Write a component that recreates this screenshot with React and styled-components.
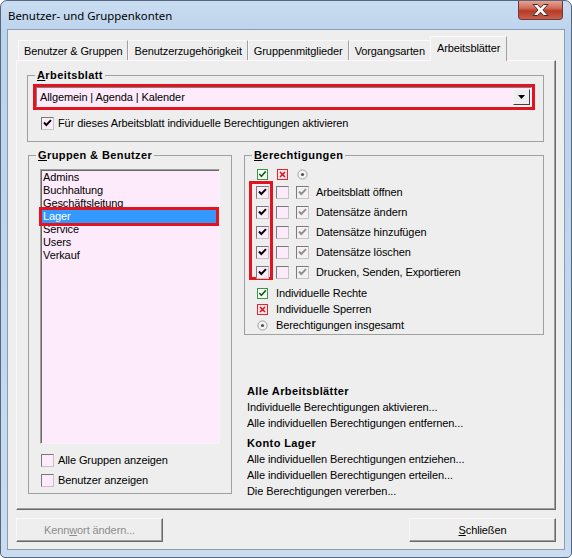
import React from 'react'
import styled, { createGlobalStyle } from 'styled-components'

const GlobalStyle = createGlobalStyle`
  html, body {
    margin: 0;
    padding: 0;
    background: #ffffff;
  }
  body {
    font-family: "Liberation Sans", Arial, sans-serif;
    font-size: 11px;
    letter-spacing: -0.1px;
    color: #000;
  }
`;

const tabs = ["Benutzer & Gruppen", "Benutzerzugehörigkeit", "Gruppenmitglieder", "Vorgangsarten", "Arbeitsblätter"];
const groups = ["Admins", "Buchhaltung", "Geschäftsleitung", "Lager", "Service", "Users", "Verkauf"];
const rights = ["Arbeitsblatt öffnen", "Datensätze ändern", "Datensätze hinzufügen", "Datensätze löschen", "Drucken, Senden, Exportieren"];

function CheckMark({ color }) {
    return (
        <svg width="11" height="11" viewBox="0 0 11 11">
            <path d="M2 4.5 L4.3 7 L9 2.2" fill="none" stroke={color} strokeWidth="1.9" />
        </svg>
    )
}

function CheckBox({ checked, disabled }) {
    return (
        <Box $disabled={disabled}>
            {checked && <CheckMark color={disabled ? "#8f8f8f" : "#000"} />}
        </Box>
    )
}

function GreenIcon() {
    return (
        <svg width="11" height="11" viewBox="0 0 11 11">
            <rect x="0.5" y="0.5" width="10" height="10" fill="#fff" stroke="#2f9d3a" />
            <path d="M2.3 5 L4.4 7.4 L8.8 2.4" fill="none" stroke="#155f1c" strokeWidth="1.6" />
        </svg>
    )
}

function RedIcon() {
    return (
        <svg width="11" height="11" viewBox="0 0 11 11">
            <rect x="0.5" y="0.5" width="10" height="10" fill="#fde6ea" stroke="#e3262e" />
            <path d="M3 3 L8 8 M8 3 L3 8" fill="none" stroke="#d8141c" strokeWidth="1.6" />
        </svg>
    )
}

function TotalIcon() {
    return (
        <svg width="11" height="11" viewBox="0 0 11 11">
            <circle cx="5.5" cy="5.5" r="4.6" fill="#f3f3f3" stroke="#a0a0a0" />
            <circle cx="5.5" cy="5.5" r="1.6" fill="#555" />
        </svg>
    )
}

function App() {
    return (
        <>
            <GlobalStyle />
            <Window>
                <TitleBar>
                    <Title>Benutzer- und Gruppenkonten</Title>
                    <CloseButton>
                        <svg width="17" height="12" viewBox="0 0 17 12">
                            <path d="M1 0.5 H5.5 L8.5 3.8 L11.5 0.5 H16 L10.9 6 L16 11.5 H11.5 L8.5 8.2 L5.5 11.5 H1 L6.1 6 Z"
                                fill="#fff" stroke="#4a2a26" strokeWidth="1" />
                        </svg>
                    </CloseButton>
                </TitleBar>
                <Client>
                    <TabStrip>
                        {tabs.map((t, i) => (
                            <Tab key={t} $active={i === tabs.length - 1}>{t}</Tab>
                        ))}
                    </TabStrip>
                    <TabPanel>
                        <GroupBox>
                            <Legend><u>A</u>rbeitsblatt</Legend>
                            <ComboFrame>
                                <Combo>
                                    <ComboText>Allgemein | Agenda | Kalender</ComboText>
                                    <DropButton>
                                        <svg width="7" height="4" viewBox="0 0 7 4"><path d="M0 0 H7 L3.5 4 Z" fill="#000" /></svg>
                                    </DropButton>
                                </Combo>
                            </ComboFrame>
                            <CheckRow $indent={8} $top={5}>
                                <CheckBox checked />
                                <span>Für dieses Arbeitsblatt individuelle Berechtigungen aktivieren</span>
                            </CheckRow>
                        </GroupBox>

                        <Columns>
                            <GroupsBox>
                                <Legend><u>G</u>ruppen &amp; Benutzer</Legend>
                                <ListBox>
                                    {groups.map(g => (
                                        <ListItem key={g} $selected={g === "Lager"}>{g}</ListItem>
                                    ))}
                                </ListBox>
                                <CheckRow $indent={7} $top={8}>
                                    <CheckBox />
                                    <span>Alle Gruppen anzeigen</span>
                                </CheckRow>
                                <CheckRow $indent={7} $top={4}>
                                    <CheckBox />
                                    <span>Benutzer anzeigen</span>
                                </CheckRow>
                            </GroupsBox>

                            <RightColumn>
                                <RightsBox>
                                    <Legend><u>B</u>erechtigungen</Legend>
                                    <IconHeader>
                                        <GreenIcon />
                                        <RedIcon />
                                        <TotalIcon />
                                    </IconHeader>
                                    <RightsGrid>
                                        <Highlight />
                                        {rights.map((r, i) => (
                                            <React.Fragment key={r}>
                                                <Cell $col={1} $row={i + 1}><CheckBox checked /></Cell>
                                                <Cell $col={2} $row={i + 1}><CheckBox /></Cell>
                                                <Cell $col={3} $row={i + 1}><CheckBox checked disabled /></Cell>
                                                <RightLabel $row={i + 1}>{r}</RightLabel>
                                            </React.Fragment>
                                        ))}
                                    </RightsGrid>
                                    <LegendList>
                                        <LegendRow><GreenIcon /><span>Individuelle Rechte</span></LegendRow>
                                        <LegendRow><RedIcon /><span>Individuelle Sperren</span></LegendRow>
                                        <LegendRow><TotalIcon /><span>Berechtigungen insgesamt</span></LegendRow>
                                    </LegendList>
                                </RightsBox>

                                <Links>
                                    <LinkHeading>Alle Arbeitsblätter</LinkHeading>
                                    <LinkLine>Individuelle Berechtigungen aktivieren...</LinkLine>
                                    <LinkLine>Alle individuellen Berechtigungen entfernen...</LinkLine>
                                    <LinkHeading $gap>Konto Lager</LinkHeading>
                                    <LinkLine>Alle individuellen Berechtigungen entziehen...</LinkLine>
                                    <LinkLine>Alle individuellen Berechtigungen erteilen...</LinkLine>
                                    <LinkLine>Die Berechtigungen vererben...</LinkLine>
                                </Links>
                            </RightColumn>
                        </Columns>
                    </TabPanel>

                    <ButtonRow>
                        <Button $disabled>Kenn<u>w</u>ort ändern...</Button>
                        <Button><u>S</u>chließen</Button>
                    </ButtonRow>
                </Client>
            </Window>
        </>
    )
}

const Window = styled.div`
    width: 572px;
    height: 558px;
    box-sizing: border-box;
    border: 1px solid #55677e;
    border-radius: 7px 7px 5px 5px;
    background: linear-gradient(180deg, #c9ddf2 0%, #bcd3ec 6%, #c2d7ee 60%, #cadcf0 100%);
    display: flex;
    flex-direction: column;
    overflow: hidden;
`;

const TitleBar = styled.div`
    height: 28px;
    flex: none;
    display: flex;
    justify-content: space-between;
    align-items: flex-start;
    padding-left: 7px;
`;

const Title = styled.div`
    margin-top: 7px;
    font-family: "Noto Sans", "Liberation Sans", sans-serif;
    font-size: 11.4px;
    letter-spacing: 0;
    color: #000;
`;

const CloseButton = styled.div`
    width: 45px;
    height: 19px;
    margin-right: 8px;
    box-sizing: border-box;
    border: 1px solid #6e3a35;
    border-top: none;
    border-radius: 0 0 4px 4px;
    background: linear-gradient(180deg, #e8a293 0%, #d06a58 40%, #b73a26 55%, #c8604c 100%);
    display: flex;
    align-items: center;
    justify-content: center;
`;

const Client = styled.div`
    flex: 1;
    min-height: 0;
    margin: 0 6px 7px;
    border: 1px solid #8a9db3;
    background: #eeeeee;
    padding: 6px 8px 7px;
    display: flex;
    flex-direction: column;
`;

const TabStrip = styled.div`
    height: 25px;
    flex: none;
    margin-bottom: -1px;
    padding-left: 2px;
    display: flex;
    align-items: flex-end;
    position: relative;
    z-index: 1;
`;

const Tab = styled.div`
    box-sizing: border-box;
    height: ${p => p.$active ? 25 : 20}px;
    margin: ${p => p.$active ? '0 -2px 0 -1px' : '0 0 1px'};
    padding: ${p => p.$active ? '0 6px 2px' : '0 5px'};
    display: flex;
    align-items: center;
    border: 1px solid;
    border-color: #fdf6fc #a0a0a0 transparent #fdf6fc;
    border-bottom: none;
    background: #eeeeee;
    white-space: nowrap;
`;

const TabPanel = styled.div`
    flex: 1;
    min-height: 0;
    border: 1px solid;
    border-color: #fdf6fc #696969 #696969 #fdf6fc;
    box-shadow: inset -1px -1px 0 #a0a0a0;
    padding: 8px 11px 15px 10px;
    display: flex;
    flex-direction: column;
`;

const GroupBox = styled.fieldset`
    margin: 0;
    padding: 2px 8px 10px 5px;
    min-width: 0;
    border: 1px solid #a0a0a0;
`;

const Legend = styled.legend`
    margin-left: 2px;
    padding: 0 2px;
    font-weight: bold;
    letter-spacing: 0.4px;
    line-height: 13px;
`;

const ComboFrame = styled.div`
    border: 3px solid #e3141f;
`;

const Combo = styled.div`
    height: 20px;
    box-sizing: border-box;
    border: 1px solid;
    border-color: #808080 #f4f4f4 #f4f4f4 #808080;
    background: #fdebfb;
    display: flex;
    align-items: center;
    padding: 0 1px 0 3px;
`;

const ComboText = styled.span`
    flex: 1;
`;

const DropButton = styled.div`
    width: 17px;
    height: 16px;
    box-sizing: border-box;
    border: 1px solid;
    border-color: #f4f4f4 #404040 #404040 #f4f4f4;
    background: #eeeeee;
    display: flex;
    align-items: center;
    justify-content: center;
`;

const CheckRow = styled.div`
    height: 16px;
    margin: ${p => p.$top}px 0 0 ${p => p.$indent}px;
    display: flex;
    align-items: center;
    gap: 4px;
`;

const Box = styled.span`
    width: 13px;
    height: 13px;
    box-sizing: border-box;
    flex: none;
    border: 1px solid;
    border-color: #7a7a7a #c4c4c4 #c4c4c4 #7a7a7a;
    background: ${p => p.$disabled ? '#f5f0f4' : '#fdebfb'};
    display: flex;
    align-items: center;
    justify-content: center;
`;

const Columns = styled.div`
    flex: 1;
    min-height: 0;
    margin-top: 7px;
    padding-left: 1px;
    display: flex;
    gap: 12px;
`;

const GroupsBox = styled(GroupBox)`
    width: 204px;
    box-sizing: border-box;
    padding: 7px 0 5px 5px;
    display: flex;
    flex-direction: column;
`;

const ListBox = styled.div`
    height: 275px;
    margin: 0 11px 0 6px;
    box-sizing: border-box;
    border: 1px solid;
    border-color: #a0a0a0 #f4f4f4 #f4f4f4 #a0a0a0;
    box-shadow: inset 1px 1px 0 #696969;
    background: #fdebfb;
    padding: 1px 0 0 1px;
`;

const ListItem = styled.div`
    height: 13px;
    line-height: 13px;
    margin-right: 3px;
    padding-left: 1px;
    background: ${p => p.$selected ? '#3399ff' : 'transparent'};
    color: ${p => p.$selected ? '#fff' : '#000'};
    outline: ${p => p.$selected ? '3px solid #e3141f' : 'none'};
    position: relative;
    z-index: ${p => p.$selected ? 1 : 0};
`;

const RightColumn = styled.div`
    flex: 1;
    display: flex;
    flex-direction: column;
`;

const RightsBox = styled(GroupBox)`
    padding: 7px 0 1px 5px;
`;

const IconHeader = styled.div`
    height: 11px;
    display: flex;
    gap: 9px;
    padding-left: 7px;
`;

const RightsGrid = styled.div`
    margin: 6px 0 0 6px;
    display: grid;
    grid-template-columns: 13px 13px 13px auto;
    grid-auto-rows: 13px;
    column-gap: 7px;
    row-gap: 7px;
`;

const Highlight = styled.div`
    grid-column: 1;
    grid-row: 1 / span 5;
    margin: -5px -4px -1px -7px;
    border: 3px solid #e3141f;
    pointer-events: none;
`;

const Cell = styled.div`
    grid-column: ${p => p.$col};
    grid-row: ${p => p.$row};
    display: flex;
`;

const RightLabel = styled.div`
    grid-column: 4;
    grid-row: ${p => p.$row};
    line-height: 13px;
    white-space: nowrap;
`;

const LegendList = styled.div`
    margin-top: 6px;
    padding-left: 7px;
`;

const LegendRow = styled.div`
    height: 16px;
    display: flex;
    align-items: center;
    gap: 8px;
`;

const Links = styled.div`
    margin: auto 0 -5px;
    padding-left: 3px;
`;

const LinkHeading = styled.div`
    height: 16px;
    line-height: 16px;
    font-weight: bold;
    letter-spacing: 0.4px;
    margin-top: ${p => p.$gap ? 4 : 0}px;
`;

const LinkLine = styled.div`
    height: 16px;
    line-height: 16px;
`;

const ButtonRow = styled.div`
    flex: none;
    margin-top: 8px;
    display: flex;
    justify-content: space-between;
`;

const Button = styled.div`
    width: 147px;
    height: 24px;
    box-sizing: border-box;
    border: 1px solid;
    border-color: #fdf6fc #696969 #696969 #fdf6fc;
    box-shadow: inset -1px -1px 0 #a0a0a0;
    display: flex;
    align-items: center;
    justify-content: center;
    color: ${p => p.$disabled ? '#8d8d8d' : '#000'};
`;

export default App
